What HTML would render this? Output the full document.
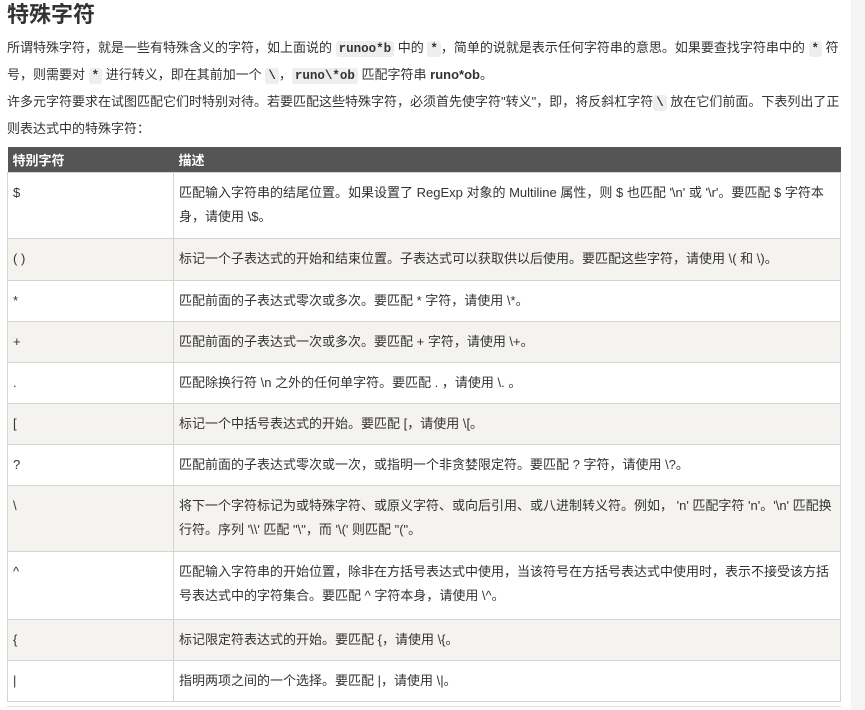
<!DOCTYPE html>
<html><head><meta charset="utf-8"><style>
body{margin:0;background:#fff;width:865px;height:710px;overflow:hidden;font-family:"Liberation Sans","Noto Sans CJK SC",sans-serif;color:#333;position:relative}
.sb{position:absolute;left:851px;top:0;width:14px;height:710px;background:#f5f5f5}
h1{position:absolute;left:7px;top:0;margin:0;font-size:22px;line-height:30px;font-weight:bold;color:#333}
.p{position:absolute;left:7px;font-size:13px;line-height:20px;white-space:nowrap}
code{font-family:"Liberation Mono",monospace;font-weight:bold;background:#eee;border-radius:3px;padding:1px 3px;font-size:12.5px}
table{position:absolute;left:7px;top:147px;width:834px;border-collapse:collapse;font-size:13px}
th{background:#555;color:#fff;text-align:left;height:25px;padding:0 5px;font-weight:bold;font-size:13px}
td{border:1px solid #d4d4d4;padding:8px 5px 0;vertical-align:top;line-height:24px;box-sizing:border-box}
tr:nth-child(odd) td{background:#f4f3ef}
td:first-child{width:166px}
.hr{position:absolute;left:7px;top:706px;width:834px;height:1px;background:#ddd}
</style></head><body>
<div class="sb"></div>
<h1>特殊字符</h1>
<div class="p" style="top:38px">所谓特殊字符，就是一些有特殊含义的字符，如上面说的 <code>runoo*b</code> 中的 <code>*</code>，简单的说就是表示任何字符串的意思。如果要查找字符串中的 <code>*</code> 符</div>
<div class="p" style="top:65px">号，则需要对 <code>*</code> 进行转义，即在其前加一个 <code>\</code>，<code>runo\*ob</code> 匹配字符串 <b>runo*ob</b>。</div>
<div class="p" style="top:92px">许多元字符要求在试图匹配它们时特别对待。若要匹配这些特殊字符，必须首先使字符"转义"，即，将反斜杠字符<code>\</code> 放在它们前面。下表列出了正</div>
<div class="p" style="top:119px">则表达式中的特殊字符：</div>
<table>
<tr><th>特别字符</th><th>描述</th></tr>
<tr style="height:66px"><td>$</td><td>匹配输入字符串的结尾位置。如果设置了 RegExp 对象的 Multiline 属性，则 $ 也匹配 '\n' 或 '\r'。要匹配 $ 字符本身，请使用 \$。</td></tr>
<tr style="height:42px"><td>( )</td><td>标记一个子表达式的开始和结束位置。子表达式可以获取供以后使用。要匹配这些字符，请使用 \( 和 \)。</td></tr>
<tr style="height:41px"><td>*</td><td>匹配前面的子表达式零次或多次。要匹配 * 字符，请使用 \*。</td></tr>
<tr style="height:41px"><td>+</td><td>匹配前面的子表达式一次或多次。要匹配 + 字符，请使用 \+。</td></tr>
<tr style="height:41px"><td>.</td><td>匹配除换行符 \n 之外的任何单字符。要匹配 . ，请使用 \. 。</td></tr>
<tr style="height:41px"><td>[</td><td>标记一个中括号表达式的开始。要匹配 [，请使用 \[。</td></tr>
<tr style="height:41px"><td>?</td><td>匹配前面的子表达式零次或一次，或指明一个非贪婪限定符。要匹配 ? 字符，请使用 \?。</td></tr>
<tr style="height:66px"><td>\</td><td>将下一个字符标记为或特殊字符、或原义字符、或向后引用、或八进制转义符。例如， 'n' 匹配字符 'n'。'\n' 匹配换行符。序列 '\\' 匹配 "\"，而 '\(' 则匹配 "("。</td></tr>
<tr style="height:68px"><td>^</td><td>匹配输入字符串的开始位置，除非在方括号表达式中使用，当该符号在方括号表达式中使用时，表示不接受该方括号表达式中的字符集合。要匹配 ^ 字符本身，请使用 \^。</td></tr>
<tr style="height:41px"><td>{</td><td>标记限定符表达式的开始。要匹配 {，请使用 \{。</td></tr>
<tr style="height:41px"><td>|</td><td>指明两项之间的一个选择。要匹配 |，请使用 \|。</td></tr>
</table>
<div class="hr"></div>
</body></html>
